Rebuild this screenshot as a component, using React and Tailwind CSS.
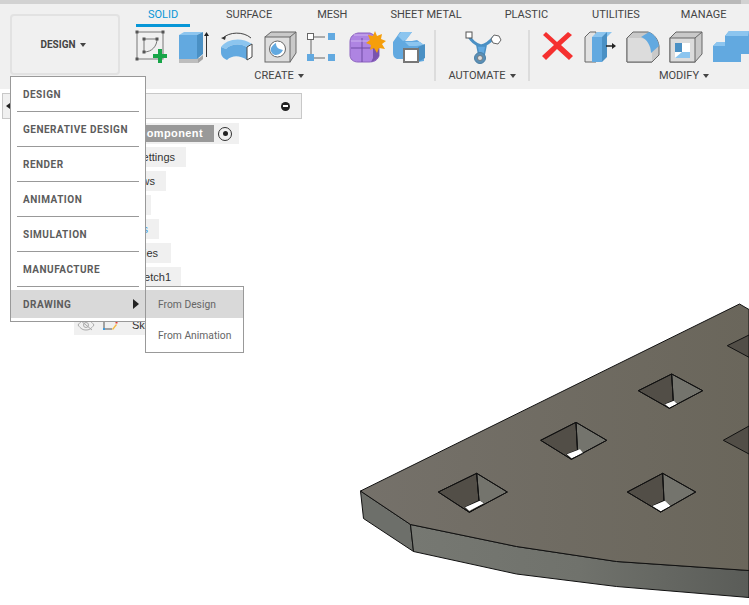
const Icon = ({ box, className, children }) => (
  <svg viewBox={box} className={`shrink-0 h-[36px] ${className}`}>
    {children}
  </svg>
);

const Caret = () => (
  <span className="ml-[4px] inline-block border-x-[3px] border-t-[4px] border-x-transparent border-t-[#444] align-middle" />
);

const tabs = [
  { name: "SOLID", cls: "w-[54px] text-[#0696d7] border-b-[3px] border-[#0696d7]" },
  { name: "SURFACE", cls: "ml-[36px] text-[#444]" },
  { name: "MESH", cls: "ml-[45px] text-[#444]" },
  { name: "SHEET METAL", cls: "ml-[43px] text-[#444]" },
  { name: "PLASTIC", cls: "ml-[43px] text-[#444]" },
  { name: "UTILITIES", cls: "ml-[44px] text-[#444]" },
  { name: "MANAGE", cls: "ml-[41px] text-[#444]" },
];

const menuItems = ["DESIGN", "GENERATIVE DESIGN", "RENDER", "ANIMATION", "SIMULATION", "MANUFACTURE"];

const treeRows = [
  { text: "Document Settings", cls: "w-[156px] pr-[11px]" },
  { text: "Named Views", cls: "w-[136px] pr-[11px]" },
  { text: "Origin", cls: "w-[121px] pr-[11px]" },
  { text: "Analysis", cls: "w-[129px] pr-[11px] text-[#3b9ae1]" },
  { text: "Bodies", cls: "w-[141px] pr-[13px]" },
  { text: "Sketch1", cls: "w-[151px] pr-[10px]" },
];

const handle = (x, y) => <rect x={x - 1.5} y={y - 1.5} width="3" height="3" fill="#555" />;

const CreateIcons = () => (
  <div className="flex">
    <Icon box="134 30 38 36" className="w-[38px]">
      <rect x="137" y="32" width="26" height="27" fill="none" stroke="#777" strokeWidth="1" />
      <path d="M144 39v13M144 39h13M157 39c0 7-5 13-13 13" fill="none" stroke="#777" />
      {handle(137, 32)}
      {handle(163, 32)}
      {handle(137, 59)}
      {handle(144, 39)}
      {handle(157, 39)}
      {handle(144, 52)}
      <path d="M158 49h4v5h5v4h-5v5h-4v-5h-5v-4h5z" fill="#18a548" />
    </Icon>
    <Icon box="172 30 42 36" className="w-[42px]">
      <path d="M179 58h24v1l-5 4h-19z" fill="#bdbdbd" />
      <path d="M198 59l5-4v4l-5 4z" fill="#a5a5a5" />
      <path d="M179 35l5-3h19l-6 3z" fill="#8cc5ef" />
      <rect x="179" y="35" width="18" height="24" fill="#62a9e0" />
      <path d="M197 35l6-3v22l-6 5z" fill="#4a90c4" />
      <path d="M206.500 57V35" stroke="#333" strokeWidth="1" />
      <path d="M204 36l2.500-4 2.500 4z" fill="#222" />
    </Icon>
    <Icon box="214 30 44 36" className="w-[44px]">
      <path d="M223 38C229 32 243 31 251 38" fill="none" stroke="#444" />
      <path d="M221 38l5-2-1 4z" fill="#333" />
      <path d="M221 47C226 40 240 36 252 44L247 47C240 43 230 44 226 49Z" fill="#8cc5ef" />
      <path d="M221 47L226 49C230 44 240 43 247 47V60C240 55 232 55 227 60C223 58 221 56 221 52Z" fill="#62a9e0" />
      <path d="M247 47L252 44V57L247 60Z" fill="#fff" stroke="#444" />
    </Icon>
    <Icon box="258 30 42 36" className="w-[42px]">
      <path d="M265 37l6-5h25v21l-6 9z" fill="#c9c9c9" stroke="#666" />
      <rect x="265" y="37" width="25" height="25" fill="#dedede" stroke="#666" />
      <path d="M290 37l6-5" stroke="#666" />
      <circle cx="277.500" cy="49" r="8" fill="#fff" stroke="#666" />
      <path d="M271 48c2-3 3-4 5-5 0 4 2 6 7 7-2 4-5 5-8 5-3-1-5-4-4-7z" fill="#62a9e0" />
    </Icon>
    <Icon box="300 30 43 36" className="w-[43px]">
      <path d="M310 37h15M310 58h15M311 40v15" stroke="#666" />
      <rect x="307.500" y="33.500" width="6" height="6" fill="#fff" stroke="#666" />
      <rect x="307" y="54" width="7" height="7" fill="#62a9e0" />
      <rect x="328" y="33" width="7" height="7" fill="#62a9e0" />
      <rect x="328" y="54" width="7" height="7" fill="#62a9e0" />
    </Icon>
    <Icon box="343 30 44 36" className="w-[44px]">
      <path d="M350 42c0-5 3-8 8-9h12c5 2 9 6 9 10v13c-2 5-6 6-10 6h-11c-5 0-8-3-8-7z" fill="#ae84e2" stroke="#8d63c0" />
      <path d="M373 43l6-2v15c-2 3-4 5-8 6l2-4z" fill="#7a54ad" />
      <path d="M351 48h22M362 38v24" stroke="#6f4aa3" />
      <path d="M351 41h20M354 35h14" stroke="#cdb2ef" />
      <path d="M375 31l2 5 5-2-1 5 5 2-4 3 3 5-6-1-2 5-3-5-4 2 1-5-5-2 4-3-2-5 5 1z" fill="#f59e0b" />
    </Icon>
    <Icon box="387 30 41 36" className="w-[41px]">
      <path d="M393 42l7-10h12l-7 9h7l5-1 7 5v16l-12 2-9-4h-6c-3-1-4-3-4-6z" fill="#62a9e0" />
      <path d="M398 36l3-4h11l-6 8-3 1zM405 42h15l4 3-8 1h-7z" fill="#8cc5ef" />
      <path d="M418 47l7-3v14l-7 4z" fill="#4a90c4" />
      <rect x="404" y="49" width="14" height="13" fill="#fff" stroke="#777" strokeWidth="2" />
    </Icon>
  </div>
);

const ModifyIcons = () => (
  <div className="flex">
    <Icon box="530 30 48 36" className="w-[48px]">
      <path d="M543 35l3-3 11 10 11-10 4 3-11 10 12 11-4 4-12-11-11 11-4-4 12-11z" fill="#f5302f" />
    </Icon>
    <Icon box="578 30 42 36" className="w-[42px]">
      <path d="M585 37l5-5h6v30h-11z" fill="#e2e2e2" stroke="#666" />
      <path d="M592 37l5-5h15l-5 5z" fill="#8cc5ef" />
      <rect x="592" y="37" width="10" height="25" fill="#62a9e0" />
      <path d="M602 37l5-5v25l-5 5z" fill="#4a90c4" />
      <path d="M606 46h7" stroke="#222" strokeWidth="1.500" />
      <path d="M612 43l4 3-4 3z" fill="#222" />
    </Icon>
    <Icon box="620 30 44 36" className="w-[44px]">
      <path d="M627 38l6-6h15c6 2 10 7 11 14v9l-7 7h-25z" fill="#c9c9c9" stroke="#666" />
      <path d="M627 38h13c7 0 12 7 12 14v10h-25z" fill="#dcdcdc" />
      <path d="M641 37l8-5c5 2 9 7 10 14l-8 7c0-7-4-14-10-16z" fill="#62a9e0" />
      <path d="M627 38v24h25" fill="none" stroke="#666" />
    </Icon>
    <Icon box="664 30 42 36" className="w-[42px]">
      <path d="M670 38l6-6h26v22l-7 8h-25z" fill="#c9c9c9" stroke="#666" />
      <rect x="670" y="38" width="25" height="24" fill="#dcdcdc" stroke="#666" />
      <path d="M695 38l7-6" stroke="#666" />
      <rect x="675" y="43" width="15" height="15" fill="#fff" />
      <path d="M675 43h7v9h-7z" fill="#4a90c4" />
      <path d="M675 58l7-6h8v6z" fill="#8cc5ef" />
    </Icon>
    <Icon box="706 30 43 36" className="w-[43px]">
      <path d="M713 46l4-4h8v-6l4-5h20v23h-8v8h-28z" fill="#62a9e0" />
      <path d="M713 46l4-4h8v4zM725 36l4-5h20l-1 5z" fill="#8cc5ef" />
    </Icon>
  </div>
);

const Toolbar = () => (
  <div className="flex h-[85px] shrink-0 bg-[#f0f0f0]">
    <div className="ml-[10px] mt-[10px] flex h-[61px] w-[110px] shrink-0 items-center justify-center rounded-[4px] border-2 border-[#e2e2e2] pr-[4px] text-[10px] font-bold text-[#444]">
      DESIGN
      <Caret />
    </div>
    <div className="ml-[16px] flex min-w-0 flex-1 flex-col">
      <div className="flex h-[23px] shrink-0 whitespace-nowrap text-[11px] leading-[22px]">
        {tabs.map((t) => (
          <div key={t.name} className={`h-[23px] shrink-0 text-center ${t.cls}`}>
            {t.name}
          </div>
        ))}
      </div>
      <div className="mt-[3px] flex -ml-[2px]">
        <div className="w-[300px] shrink-0">
          <CreateIcons />
          <div className="mt-[4px] pr-[10px] text-center text-[11px] leading-[12px] text-[#444]">
            CREATE
            <Caret />
          </div>
        </div>
        <div className="h-[51px] w-[2px] shrink-0 bg-[#dcdcdc]" />
        <div className="w-[92px] shrink-0">
          <Icon box="437 30 92 36" className="w-[92px]">
            <path d="M469 35c4 7 9 10 13 11 5-1 9-4 13-9" fill="none" stroke="#4a90c4" strokeWidth="3" />
            <path d="M478 46h9l-2 10h-5z" fill="#62a9e0" stroke="#4a90c4" strokeWidth="1.500" />
            <rect x="467" y="32" width="6" height="6" fill="#fff" stroke="#555" />
            <path d="M495 35l5 1 2 4-3 4-5-1-2-4z" fill="#fff" stroke="#666" />
            <circle cx="481" cy="58" r="5.500" fill="#5b8fb5" stroke="#4a7fa5" />
            <circle cx="481" cy="58" r="2.500" fill="#ddd" stroke="#666" strokeWidth="0.700" />
          </Icon>
          <div className="mt-[4px] text-center text-[11px] leading-[12px] text-[#444]">
            AUTOMATE
            <Caret />
          </div>
        </div>
        <div className="h-[51px] w-[2px] shrink-0 bg-[#dcdcdc]" />
        <div className="w-[308px] shrink-0">
          <ModifyIcons />
          <div className="mt-[4px] text-center text-[11px] leading-[12px] text-[#444]">
            MODIFY
            <Caret />
          </div>
        </div>
      </div>
    </div>
  </div>
);

const Hole = ({ l, t, r, b, inner, white }) => (
  <g stroke="#111" strokeWidth="1">
    <path d={`M${l} L${t} L${inner} L${white[0]} L${b} Z`} fill="#524e47" />
    <path d={`M${t} L${r} L${b} L${white[2]} L${inner} Z`} fill="#74746d" />
    <path d={`M${white[0]} L${white[1]} L${white[2]} L${white[3]} Z`} fill="#fff" stroke="none" />
    <path d={`M${l} L${t} L${r} L${b} Z`} fill="none" />
    <path d={`M${t} L${inner}`} fill="none" />
  </g>
);

// plate with the square pockets, coordinates are page pixels
const Model = () => (
  <svg viewBox="0 89 749 516" className="absolute inset-0 h-[516px] w-[749px]">
    <defs>
      <linearGradient id="top" x1="0" y1="0" x2="1" y2="0">
        <stop offset="0" stopColor="#75716a" />
        <stop offset="1" stopColor="#6a665b" />
      </linearGradient>
      <linearGradient id="side" x1="0" y1="0" x2="1" y2="0">
        <stop offset="0" stopColor="#767872" />
        <stop offset="0.5" stopColor="#70726c" />
        <stop offset="1" stopColor="#5a5c58" />
      </linearGradient>
    </defs>
    <path d="M360.500 491L410.500 524.500L413.500 551.500L363.500 518.500Z" fill="#6d6f6a" stroke="#111" />
    <path d="M410.500 524.500L516.500 546.500L616.500 561.500L749 570.500V597.500L616.500 586.500L516.500 574L413.500 551.500Z" fill="url(#side)" stroke="#111" />
    <path d="M360.500 491L739.500 304L749 309.500V570.500L616.500 561.500L516.500 546.500L410.500 524.500Z" fill="url(#top)" stroke="#111" />
    <Hole l="438.300 492" t="476.700 473.300" r="507.300 492" b="469.300 512.300" inner="479 500.500" white={["465 507.300", "480 500.700", "484 503.300", "469.300 510.700"]} />
    <Hole l="540.700 440.300" t="576 422.300" r="606.700 440.300" b="571.300 459.300" inner="577.500 450" white={["566.700 454.300", "580 449.300", "583.300 453.300", "571.700 458.300"]} />
    <Hole l="638.300 390.700" t="671.700 374" r="702.700 390.700" b="669.300 408.300" inner="673.300 400.500" white={["665 404.300", "674 400.700", "677.300 404", "669.300 407.700"]} />
    <Hole l="627.300 492" t="662.700 473.300" r="695.700 492" b="660.700 512" inner="664 500.500" white={["652.300 506", "665 500.700", "670.700 506", "660.700 511.300"]} />
    <path d="M723.300 440.300L749 426V454Z" fill="#524e47" stroke="#111" />
    <path d="M727.300 345.700L749 335V357.300Z" fill="#524e47" stroke="#111" />
  </svg>
);

const Tree = () => (
  <div className="relative flex flex-col items-start font-['Liberation_Sans',sans-serif] text-[11px] text-[#333]">
    <div className="ml-[2px] mt-[4px] flex h-[26px] w-[300px] items-center justify-between border border-[#c8c8c8] bg-[#f0f0f0] pl-[3px] pr-[11px]">
      <span className="border-y-[3px] border-r-[4px] border-y-transparent border-r-[#222]" />
      <span className="flex size-[9px] items-center justify-center rounded-full bg-[#222]">
        <span className="h-[1.500px] w-[5px] bg-white" />
      </span>
    </div>
    <div className="ml-[30px] mt-[4px] flex h-[21px] w-[209px] items-center bg-[#f0f0f0]">
      <span className="flex h-[17px] w-[184px] items-center justify-end bg-[#999] pr-[11px] font-bold tracking-[0.4px] text-white">
        Component
      </span>
      <span className="ml-[4px] flex size-[14px] items-center justify-center rounded-full border border-[#333]">
        <span className="size-[5px] rounded-full bg-[#222]" />
      </span>
    </div>
    <div className="mt-[3px] flex flex-col gap-[4px]">
      {treeRows.map((r) => (
        <div
          key={r.text}
          className={`ml-[30px] flex h-[20px] items-center justify-end whitespace-nowrap bg-[#f0f0f0] ${r.cls}`}
        >
          {r.text}
        </div>
      ))}
    </div>
    <div className="ml-[74px] mt-[28px] flex h-[20px] w-[115px] items-center bg-[#f0f0f0]">
      <svg viewBox="0 0 18 12" className="ml-[3px] h-[12px] w-[18px] shrink-0">
        <path d="M1 6c3-4 5-5 8-5s5 1 8 5c-3 4-5 5-8 5s-5-1-8-5z" fill="none" stroke="#aaa" />
        <circle cx="9" cy="6" r="2.500" fill="none" stroke="#aaa" />
        <path d="M3 1l12 10" stroke="#aaa" />
      </svg>
      <svg viewBox="0 0 16 14" className="ml-[7px] h-[14px] w-[16px] shrink-0">
        <path d="M2 1v10h8" fill="none" stroke="#555" />
        <rect x="1" y="10" width="2" height="2" fill="#3b9ae1" />
        <path d="M10 11l4-5 1 1-4 5z" fill="#f5b942" />
        <rect x="13.500" y="3.500" width="2" height="2" fill="#e53935" />
      </svg>
      <span className="ml-[14px] whitespace-nowrap">Sketches</span>
    </div>
  </div>
);

const DesignMenu = () => (
  <div className="absolute left-[10px] top-[76px] w-[136px] border border-[#999] bg-white font-['Roboto',sans-serif] text-[10px] font-bold tracking-[0.5px] text-[#5c5c5c]">
    <div className="flex flex-col px-[6px]">
      {menuItems.map((m) => (
        <div key={m} className="flex h-[35px] items-center border-b border-[#999] pl-[6px] pt-[1px]">
          {m}
        </div>
      ))}
    </div>
    <div className="mb-[3px] mt-[3px] flex h-[28px] items-center justify-between bg-[#d9d9d9] pl-[12px] pr-[6px]">
      DRAWING
      <span className="border-y-[5px] border-l-[6px] border-y-transparent border-l-[#222]" />
    </div>
  </div>
);

const DrawingMenu = () => (
  <div className="absolute left-[145px] top-[286px] h-[67px] w-[99px] border border-[#999] bg-white pt-[3px] font-['Roboto',sans-serif] text-[10.3px] text-[#666]">
    <div className="flex h-[28px] items-center bg-[#d9d9d9] pl-[12px] pt-[1px]">From Design</div>
    <div className="mt-[2px] flex h-[31px] items-center pl-[12px]">From Animation</div>
  </div>
);

export default function App() {
  return (
    <div className="relative flex h-[605px] w-[749px] flex-col overflow-hidden bg-white font-['Roboto',sans-serif]">
      <div className="flex h-[4px] shrink-0">
        <div className="w-[190px] bg-[#d2d2d2]" />
        <div className="w-[551px] bg-[#b9b9b9]" />
        <div className="flex-1 bg-[#d2d2d2]" />
      </div>
      <Toolbar />
      <div className="relative flex-1">
        <Model />
        <Tree />
      </div>
      <DesignMenu />
      <DrawingMenu />
    </div>
  );
}
